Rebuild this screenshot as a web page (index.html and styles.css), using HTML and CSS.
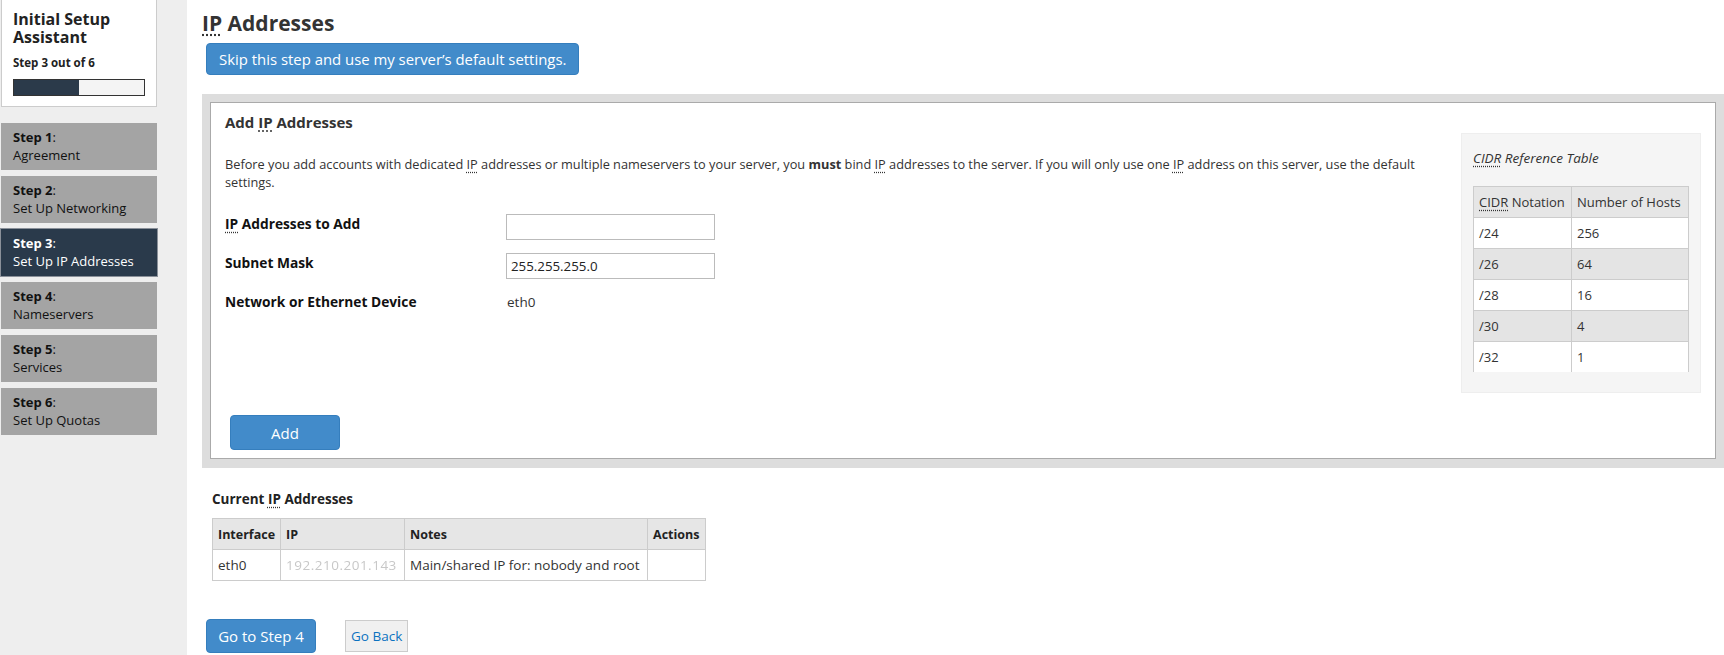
FILE: index.html
```
<!DOCTYPE html>
<html>
<head>
<title>Initial Setup Assistant - IP Addresses</title>
<link rel="stylesheet" href="styles.css">
</head>
<body>
<div id="sidebar">
  <div class="setup-box">
    <div class="setup-title">Initial Setup Assistant</div>
    <div class="setup-count">Step 3 out of 6</div>
    <div class="progress"><div class="progress-fill"></div></div>
  </div>
  <div class="step"><b>Step 1</b>:<br>Agreement</div>
  <div class="step"><b>Step 2</b>:<br>Set Up Networking</div>
  <div class="step active"><b>Step 3</b>:<br>Set Up IP Addresses</div>
  <div class="step"><b>Step 4</b>:<br>Nameservers</div>
  <div class="step"><b>Step 5</b>:<br>Services</div>
  <div class="step"><b>Step 6</b>:<br>Set Up Quotas</div>
</div>

<div id="main">
  <h1><abbr title="Internet Protocol">IP</abbr> Addresses</h1>
  <button class="btn btn-skip">Skip this step and use my server’s default settings.</button>

  <div class="panel-wrap">
    <div class="panel">
      <h2>Add <abbr title="Internet Protocol">IP</abbr> Addresses</h2>
      <div class="panel-row">
        <div class="panel-left">
          <p class="intro"><span>Before you add accounts with dedicated</span> <abbr title="Internet Protocol">IP</abbr> <span>addresses or multiple nameservers to your server, you</span> <b>must</b> <span>bind</span> <abbr title="Internet Protocol">IP</abbr> <span>addresses to the server. If you will only use one</span> <abbr title="Internet Protocol">IP</abbr> <span>address on this server, use the default</span> <span>settings.</span></p>
          <div class="form-grid">
            <label class="form-label"><abbr title="Internet Protocol">IP</abbr> Addresses to Add</label>
            <input type="text" class="form-input">
            <label class="form-label">Subnet Mask</label>
            <input type="text" class="form-input" value="255.255.255.0">
            <label class="form-label">Network or Ethernet Device</label>
            <div class="form-value">eth0</div>
          </div>
        </div>
        <div class="cidr-box">
          <div class="cidr-title"><abbr title="Classless Inter-Domain Routing">CIDR</abbr> Reference Table</div>
          <table class="cidr-table">
            <tr><th class="cidr-col1"><abbr title="Classless Inter-Domain Routing">CIDR</abbr> Notation</th><th>Number of Hosts</th></tr>
            <tr><td>/24</td><td>256</td></tr>
            <tr class="alt"><td>/26</td><td>64</td></tr>
            <tr><td>/28</td><td>16</td></tr>
            <tr class="alt"><td>/30</td><td>4</td></tr>
            <tr class="last"><td>/32</td><td>1</td></tr>
          </table>
        </div>
      </div>
      <button class="btn btn-add">Add</button>
    </div>
  </div>

  <div class="current">
    <h3>Current <abbr title="Internet Protocol">IP</abbr> Addresses</h3>
    <table class="ip-table">
      <tr><th class="col-if">Interface</th><th class="col-ip">IP</th><th class="col-notes">Notes</th><th class="col-act">Actions</th></tr>
      <tr><td>eth0</td><td><span class="masked">192.210.201.143</span></td><td>Main/shared IP for: nobody and root</td><td></td></tr>
    </table>
  </div>

  <div class="nav-buttons">
    <button class="btn btn-next">Go to Step 4</button>
    <button class="btn-back">Go Back</button>
  </div>
</div>
</body>
</html>
```
FILE: styles.css
```
body {
margin: 0;
font-family: "Open Sans", "DejaVu Sans", sans-serif;
font-size: 12.75px;
color: #333;
background-color: #fff;
display: flex;
min-height: 100vh;
}

abbr {
text-decoration: underline dotted #333;
text-underline-offset: 3px;
}

/* sidebar */
#sidebar {
width: 187px;
flex-shrink: 0;
background-color: #eee;
}
.setup-box {
width: 132px;
margin-left: 1px;
padding: 10px 11px 0 11px;
height: 96px;
background-color: #fff;
border: 1px solid #ccc;
border-top: none;
}
.setup-title {
font-size: 16px;
font-weight: bold;
line-height: 18px;
color: #222;
}
.setup-count {
font-size: 11.5px;
font-weight: bold;
color: #222;
margin-top: 9px;
}
.progress {
margin-top: 9px;
height: 15px;
border: 1px solid #333;
background-color: #f4f4f4;
}
.progress-fill {
width: 50%;
height: 100%;
background-color: #2b3a4a;
}
.step {
width: 132px;
margin-left: 1px;
margin-top: 6px;
padding: 5px 12px 6px 12px;
line-height: 18px;
font-size: 13px;
background-color: #a4a4a4;
color: #111;
}
.setup-box + .step {
margin-top: 16px;
}
.step.active {
background-color: #2a3a4b;
color: #fff;
outline: 1px solid #8a9099;
}

/* main */
#main {
flex: 1;
padding: 10px 0 0 15px;
}
h1 {
margin: 0;
font-size: 21px;
line-height: 27px;
font-weight: bold;
color: #333;
}
.btn {
font-family: "Open Sans", "DejaVu Sans", sans-serif;
background-color: #428bca;
border: 1px solid #357ebd;
border-radius: 4px;
color: #fff;
font-size: 15px;
cursor: pointer;
}
.btn-skip {
display: block;
margin: 6px 0 0 4px;
height: 32px;
padding: 0 12px;
font-size: 14.9px;
}
.panel-wrap {
margin-top: 19px;
background-color: #ddd;
padding: 8px 8px 9px 8px;
}
.panel {
background-color: #fff;
border: 1px solid #aaa;
padding: 9px 14px 8px 14px;
}
h2 {
margin: 0;
font-size: 15px;
line-height: 20px;
font-weight: bold;
color: #333;
}
.panel-row {
display: flex;
align-items: flex-start;
}
.panel-left {
flex: 1;
}
.intro {
margin: 23px 30px 0 0;
line-height: 18px;
}
.form-grid {
margin-top: 23px;
display: grid;
grid-template-columns: 281px 209px;
row-gap: 13px;
align-items: start;
}
.form-label {
font-weight: bold;
font-size: 13.75px;
line-height: 20px;
color: #111;
}
.form-input {
box-sizing: border-box;
width: 209px;
height: 26px;
border: 1px solid #bbb;
padding: 2px 4px;
font-family: "Open Sans", "DejaVu Sans", sans-serif;
font-size: 13.3px;
color: #222;
}
.form-value {
line-height: 20px;
padding-left: 1px;
font-size: 13.5px;
}
.cidr-box {
width: 216px;
margin-top: 1px;
padding: 14px 11px 20px 11px;
background-color: #f5f5f5;
border: 1px solid #eee;
}
.cidr-title {
font-style: italic;
font-size: 13.5px;
line-height: 20px;
margin-bottom: 18px;
}
.cidr-table {
width: 100%;
border-collapse: collapse;
font-size: 13px;
}
.cidr-table th,
.cidr-table td {
border: 1px solid #ccc;
height: 30px;
padding: 0 5px;
text-align: left;
font-weight: normal;
white-space: nowrap;
}
.cidr-table th {
background-color: #e6e6e6;
}
.cidr-col1 {
width: 87px;
}
.cidr-table tr {
background-color: #fff;
}
.cidr-table tr.alt {
background-color: #e4e4e4;
}
.cidr-table tr.last td {
border-bottom: none;
}
.btn-add {
display: block;
margin: 22px 0 0 5px;
width: 110px;
height: 35px;
}

/* current IP table */
.current {
padding-left: 10px;
margin-top: 22px;
}
h3 {
margin: 0;
font-size: 13.5px;
line-height: 18px;
font-weight: bold;
color: #222;
}
.ip-table {
margin-top: 10px;
border-collapse: collapse;
font-size: 13.5px;
}
.ip-table th,
.ip-table td {
border: 1px solid #ccc;
height: 30px;
padding: 0 5px;
text-align: left;
white-space: nowrap;
}
.ip-table th {
background-color: #e6e6e6;
font-size: 12.5px;
font-weight: bold;
color: #222;
}
.col-if { width: 54px; }
.col-ip { width: 113px; }
.col-notes { width: 232px; }
.col-act { width: 44px; }
.masked {
color: #c8c8c8;
letter-spacing: 0.5px;
filter: blur(0.5px);
}
.nav-buttons {
display: flex;
align-items: center;
gap: 29px;
margin: 38px 0 0 4px;
}
.btn-next {
width: 110px;
height: 34px;
}
.btn-back {
height: 32px;
padding: 0 5px;
background-color: #f0f0f0;
border: 1px solid #ccc;
color: #0b72c0;
font-family: "Open Sans", "DejaVu Sans", sans-serif;
font-size: 13.5px;
cursor: pointer;
}
```
